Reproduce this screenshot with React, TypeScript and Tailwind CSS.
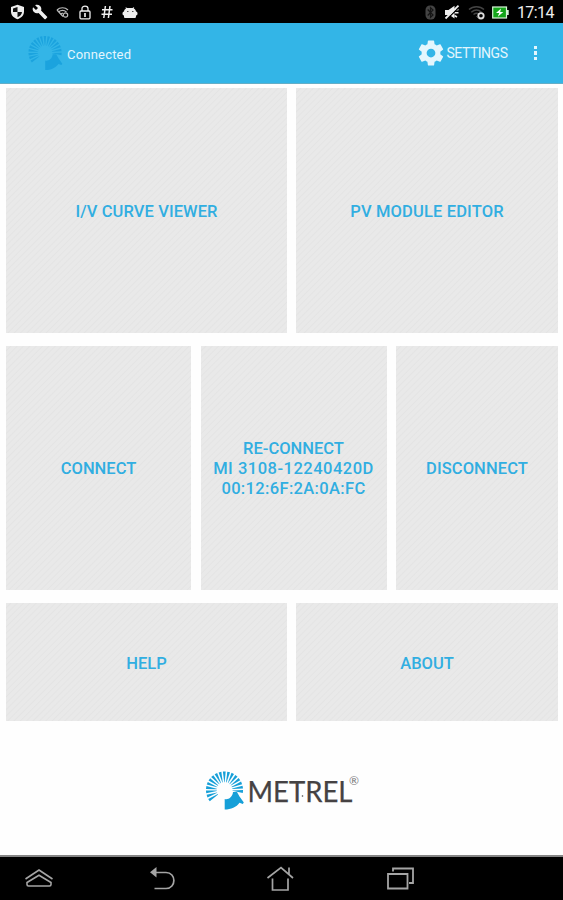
import React from 'react';

interface TileProps {
  className?: string;
  children: React.ReactNode;
}

const RAYS = Array.from({ length: 17 }, (_, i) => 147 + i * 13.6);

const FanLogo: React.FC<{ className?: string }> = ({ className }) => (
  <svg viewBox="0 0 38 38" className={className} fill="currentColor">
    {RAYS.map((angle) => (
      <path key={angle} d="M26.3 18.3 L37 17.1 L37 19.9 L26.3 18.7 Z" transform={`rotate(${angle} 18.5 18.5)`} />
    ))}
    <path d="M18.7 27.5 C22 28.5 26.5 26 27 20.5 L31 20.5 L33.5 25 L37.8 31 L36.8 32.5 L33.5 31.2 C30.5 35.5 25 38 18.7 38 Z" />
  </svg>
);

const Tile: React.FC<TileProps> = ({ className = '', children }) => (
  <button
    className={`flex items-center justify-center bg-[#e8e8e8] bg-[repeating-linear-gradient(135deg,#e9e9e9_0px,#e9e9e9_2.5px,#e4e4e4_3.5px,#e9e9e9_4.5px)] pt-[2px] text-center text-[16.5px] leading-[20px] font-medium text-[#31aee1] ${className}`}
  >
    {children}
  </button>
);

const StatusBar: React.FC = () => (
  <div className="flex h-[23px] shrink-0 items-center justify-between bg-black pr-[9px] pl-[10px] text-[#eeeeee]">
    <div className="flex items-center pt-px">
      <svg className="h-4 w-[15px]" viewBox="0 0 15 16">
        <path d="M7.5 .8 L14 3 V7.5 C14 11.5 11 14 7.5 15.3 C4 14 1 11.5 1 7.5 V3 Z" fill="currentColor" />
        <path d="M7.5 3 V8 H3 V4.4 Z M7.5 8 H12 C11.8 10.5 10 12.2 7.5 13.2 Z" fill="#111" />
      </svg>
      <svg className="ml-[7px] h-4 w-4" viewBox="0 0 24 24" fill="currentColor">
        <path d="M22.7 19l-9.1-9.1c.9-2.3.4-5-1.5-6.9-2-2-5-2.4-7.4-1.3L9 6 6 9 1.6 4.7C.4 7.1.9 10.1 2.9 12.1c1.9 1.9 4.6 2.4 6.9 1.5l9.1 9.1c.4.4 1 .4 1.4 0l2.3-2.3c.5-.4.5-1.1.1-1.4z" />
      </svg>
      <svg className="ml-[8px] h-[13px] w-[14px]" viewBox="0 0 14 13" fill="none" stroke="#bbb" strokeWidth="1.2">
        <path d="M1 4 C4 1 9 1 12 4 M2.5 6 C5 4 8 4 10.5 6 M1 4 L7 10.5" />
        <circle cx="9.5" cy="9" r="2.2" />
        <path d="M4.5 8 L7 7" />
      </svg>
      <svg className="ml-[9px] h-[15px] w-[12px]" viewBox="0 0 12 15" fill="none" stroke="currentColor" strokeWidth="1.3">
        <path d="M3 6 V3.5 C3 .3 9 .3 9 3.5 V6" />
        <rect x="1" y="6" width="10" height="7.8" rx="1" />
        <path d="M6 8 V12" strokeWidth="1.7" />
      </svg>
      <svg className="ml-[10px] h-[14px] w-[12px]" viewBox="0 0 12 14" fill="none" stroke="currentColor" strokeWidth="1.5">
        <path d="M4.4 1 L2.8 13 M9 1 L7.4 13 M1 4.7 H11.5 M.5 9.3 H11" />
      </svg>
      <svg className="ml-[9px] h-[13px] w-[16px]" viewBox="0 0 16 13" fill="currentColor">
        <path d="M3 12 C1.8 12 2 10.5 2 9.5 C0 9.5 0 5.5 2 5.5 C2.2 4 3.2 3 4 2.6 L3.4 1.2 L5.3 2 H10.5 L12.2 1 L11.8 2.6 C13 3.3 13.8 4.3 14 5.5 C16 5.5 16 9.5 14 9.5 C14 10.5 14 12 13 12 Z" />
        <path d="M5 5 H6.5 V6 H5 Z M10 5 H11.5 V6 H10 Z" fill="#555" />
      </svg>
    </div>
    <div className="flex items-center pt-px">
      <svg className="h-[15px] w-[11px]" viewBox="0 0 11 15">
        <rect x=".5" y=".5" width="10" height="14" rx="4.5" fill="#444" />
        <path d="M2.7 4.5 L8 10 L5.5 12.3 V2.7 L8 5 L2.7 10.5" fill="none" stroke="#151515" strokeWidth="1.2" />
      </svg>
      <svg className="ml-[8px] h-[15px] w-[16px]" viewBox="0 0 16 15">
        <path d="M1 5 H4.5 L10.5 .8 V13.5 L5.5 10 H1 Z" fill="currentColor" />
        <path d="M11 5 L14.5 4.5 M11 7.8 H14.5 M10.5 10.5 L13 12" stroke="currentColor" strokeWidth="1.5" />
        <path d="M3 14 L15.5 1.8" stroke="#000" strokeWidth="1.4" />
        <path d="M1.5 13.5 L14.5 .7" stroke="currentColor" strokeWidth="1.8" />
      </svg>
      <svg className="ml-[8px] h-[15px] w-[18px]" viewBox="0 0 18 15" fill="none">
        <path d="M1 4.5 C5 .8 12 .8 16 4.5 M3.3 7.2 C6.5 4.5 10.5 4.5 13.5 7.2 M5.5 9.5 C7.5 8 9.5 8 11 9" stroke="#444" strokeWidth="1.5" />
        <circle cx="13" cy="10.8" r="2.7" stroke="#ddd" strokeWidth="1.8" />
        <path d="M8.5 11.5 L10.5 13" stroke="#777" />
      </svg>
      <svg className="ml-[6px] h-[13px] w-[17px]" viewBox="0 0 17 13">
        <rect x=".7" y="1" width="13.8" height="11" fill="#14a51a" stroke="#d8f4d8" strokeWidth="1.2" />
        <rect x="15" y="4" width="1.7" height="5" fill="#d8f4d8" />
        <path d="M9 2.5 L4 7 H7.2 L5.8 10.8 L11.3 6 H8.2 Z" fill="#fff" />
      </svg>
      <span className="ml-[8px] text-[16px] leading-[23px] tracking-[-0.55px]">17:14</span>
    </div>
  </div>
);

const Header: React.FC = () => (
  <header className="flex h-[61px] shrink-0 items-center border-b border-[#64aec7] bg-[#33b5e7] text-[#e4f6fd]">
    <FanLogo className="ml-[28px] h-[34px] w-[35px] text-[#1ba3de]" />
    <h1 className="mt-[4px] ml-1 w-[110px] text-[13px] leading-4 tracking-[0.2px]">Connected</h1>
    <button className="ml-auto flex items-center">
      <svg className="h-[30px] w-[30px]" viewBox="0 0 24 24" fill="currentColor">
        <path d="M19.43 12.98c.04-.32.07-.64.07-.98s-.03-.66-.07-.98l2.11-1.65c.19-.15.24-.42.12-.64l-2-3.46c-.12-.22-.39-.3-.61-.22l-2.49 1c-.52-.4-1.08-.73-1.69-.98l-.38-2.65C14.46 2.18 14.25 2 14 2h-4c-.25 0-.46.18-.49.42l-.38 2.65c-.61.25-1.17.59-1.69.98l-2.49-1c-.23-.09-.49 0-.61.22l-2 3.46c-.13.22-.07.49.12.64l2.11 1.65c-.04.32-.07.65-.07.98s.03.66.07.98l-2.11 1.65c-.19.15-.24.42-.12.64l2 3.46c.12.22.39.3.61.22l2.49-1c.52.4 1.08.73 1.69.98l.38 2.65c.03.24.24.42.49.42h4c.25 0 .46-.18.49-.42l.38-2.65c.61-.25 1.17-.59 1.69-.98l2.49 1c.23.09.49 0 .61-.22l2-3.46c.12-.22.07-.49-.12-.64l-2.11-1.65zM12 15.5c-1.93 0-3.5-1.57-3.5-3.5s1.57-3.5 3.5-3.5 3.5 1.57 3.5 3.5-1.57 3.5-3.5 3.5z" />
      </svg>
      <span className="w-[63px] text-[14px] leading-4 tracking-[-0.48px]">SETTINGS</span>
    </button>
    <button className="mr-[26px] ml-[25px] flex flex-col gap-[2px]">
      <span className="size-[3.5px] bg-current" />
      <span className="size-[3.5px] bg-current" />
      <span className="size-[3.5px] bg-current" />
    </button>
  </header>
);

const NavBar: React.FC = () => (
  <nav className="flex h-[45px] shrink-0 items-center border-t-2 border-[#858585] bg-black pl-[24px] text-[#a5a5a5]">
    <svg className="h-[24px] w-[30px]" viewBox="0 0 30 24" fill="none" stroke="currentColor" strokeWidth="1.6">
      <path d="M1.5 12 L15 3 L28.5 12 M15 8.3 L27 15.5 V17.5 C27 18.5 26.5 19 25.5 19 H4.5 C3.5 19 3 18.5 3 17.5 V15.5 Z" />
    </svg>
    <svg className="ml-[95px] h-[26px] w-[28px]" viewBox="0 0 28 26" fill="none" stroke="currentColor" strokeWidth="1.7">
      <path d="M7 6.5 H17 C27.5 6.5 27.5 22.5 17 22.5 H5.5" />
      <path d="M1 6.3 L7.5 1 V11.5 Z" fill="currentColor" stroke="none" />
    </svg>
    <svg className="ml-[89px] h-[28px] w-[28px]" viewBox="0 0 28 28" fill="none" stroke="currentColor" strokeWidth="1.7">
      <path d="M1.5 13 L15 2.5 L27 13 M23 9.5 V2.5 M6.5 13.5 V25 H22 V13.5" />
    </svg>
    <svg className="ml-[92px] h-[26px] w-[29px]" viewBox="0 0 29 26" fill="none" stroke="currentColor" strokeWidth="1.8">
      <path d="M2 8 H21.5 V22.5 H2 Z M7 5.5 V2.5 H27 V17 H23" />
    </svg>
  </nav>
);

const App: React.FC = () => {
  return (
    <div className="flex h-[900px] w-[563px] flex-col overflow-hidden bg-[#fefefe] font-['Roboto',sans-serif]">
      <StatusBar />
      <Header />
      <main className="flex flex-1 flex-col pt-[4px] pr-[5px] pl-[6px]">
        <div className="grid h-[245px] grid-cols-[281px_262px] gap-[9px]">
          <Tile className="tracking-[0.1px]">I/V CURVE VIEWER</Tile>
          <Tile className="tracking-[0.15px]">PV MODULE EDITOR</Tile>
        </div>
        <div className="mt-[13px] grid h-[244px] grid-cols-[185px_186px_162px] gap-x-[9.5px]">
          <Tile>CONNECT</Tile>
          <Tile>
            <span>
              RE-CONNECT
              <br />
              <span className="tracking-[0.5px]">MI 3108-12240420D</span>
              <br />
              <span className="tracking-[0.35px]">00:12:6F:2A:0A:FC</span>
            </span>
          </Tile>
          <Tile className="tracking-[0.1px]">DISCONNECT</Tile>
        </div>
        <div className="mt-[13px] grid h-[118px] grid-cols-[281px_262px] gap-[9px]">
          <Tile className="pt-[4px]">HELP</Tile>
          <Tile className="pt-[4px]">ABOUT</Tile>
        </div>
        <div className="mt-[50px] ml-[200px] flex items-start">
          <FanLogo className="h-[39px] w-[38px] text-[#159fd8]" />
          <svg className="ml-[4px] h-[39px] w-[112px] font-['Lato',sans-serif]" viewBox="0 0 112 39" fill="#454243">
            <text x="-0.5" y="30.7" fontSize="28.5" stroke="#454243" strokeWidth="0.25" textLength="105" lengthAdjust="spacingAndGlyphs">METREL</text>
            <circle cx="54.5" cy="25" r="0.8" />
            <text x="101" y="14" fontSize="12" fill="#777">®</text>
          </svg>
        </div>
      </main>
      <NavBar />
    </div>
  );
};

export default App;
